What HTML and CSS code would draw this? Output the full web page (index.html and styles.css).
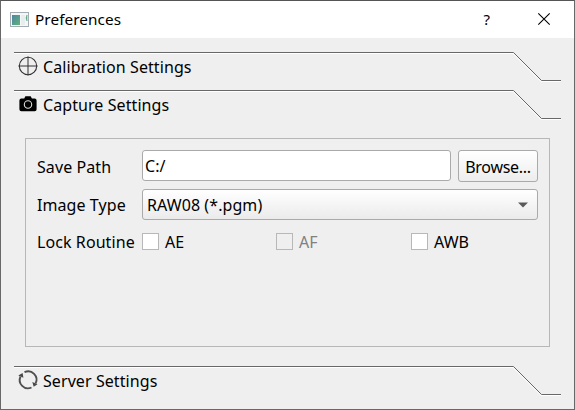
FILE: index.html
```html
<!DOCTYPE html>
<html lang="en">
<head>
<meta charset="utf-8">
<title>Preferences</title>
<link rel="stylesheet" href="styles.css">
</head>
<body>
<main class="window">
  <header class="titlebar">
    <svg class="app-icon" width="19" height="15" viewBox="0 0 19 15">
      <defs><linearGradient id="pane" x1="0" y1="0" x2="1" y2="1"><stop offset="0" stop-color="#4f84a4"/><stop offset="1" stop-color="#5fb477"/></linearGradient></defs>
      <rect x=".5" y=".5" width="18" height="14" fill="#f5f7f7" stroke="#a3adb3"/>
      <rect x="2" y="3" width="8" height="10" fill="url(#pane)"/>
      <rect x="11" y="3" width="4" height="10" fill="#e9edef"/>
      <path d="M17 3v6l-1-3z" fill="#58aa83" stroke="#58aa83" stroke-width=".6"/>
    </svg>
    <h1 class="title">Preferences</h1>
    <span class="help">?</span>
    <svg class="close" width="12" height="12" viewBox="0 0 12 12"><path d="M.3.3l11.4 11.4M11.7.3L.3 11.7" stroke="#000" stroke-width="1.1"/></svg>
  </header>

  <section class="toolbox">
    <div class="tab">
      <svg class="edge" width="547" height="30" viewBox="0 0 547 30"><path class="light" d="M0 1.5H499L527 29.5H547"/><path class="dark" d="M0 .5H499.5L527.5 28.5H547"/></svg>
      <svg class="icon" width="20" height="20" viewBox="0 0 20 20"><g fill="none" stroke="#333"><circle cx="10" cy="10" r="8.7" stroke-width="1.1"/><path d="M10 .5v19M.5 10h19" stroke-width="1"/></g></svg>
      <span class="label">Calibration Settings</span>
    </div>
    <div class="tab">
      <svg class="edge" width="547" height="30" viewBox="0 0 547 30"><path class="light" d="M0 1.5H499L527 29.5H547"/><path class="dark" d="M0 .5H499.5L527.5 28.5H547"/></svg>
      <svg class="icon" width="20" height="20" viewBox="0 0 20 20"><path d="M3.4 4.5h2.8l1.2-2.3h5.3l1.2 2.3h2.7q2 0 2 2v8.7q0 2-2 2H3.4q-2 0-2-2V6.500q0-2 2-2z" fill="#000"/><circle cx="10" cy="10.500" r="3.700" fill="none" stroke="#ddd" stroke-width="1.100"/></svg>
      <span class="label">Capture Settings</span>
    </div>

    <form class="panel">
      <div class="row path-row">
        <span class="name">Save Path</span>
        <div class="field">C:/</div>
        <button class="browse" type="button">Browse...</button>
      </div>
      <div class="row type-row">
        <span class="name">Image Type</span>
        <div class="combo"><span class="value">RAW08 (*.pgm)</span><svg width="10" height="6" viewBox="0 0 10 6"><path d="M0 .5h10L5 5.500z" fill="#5a5a5a"/></svg></div>
      </div>
      <div class="row lock-row">
        <span class="name">Lock Routine</span>
        <span class="check"><i class="box"></i><span>AE</span></span>
        <span class="check disabled"><i class="box"></i><span>AF</span></span>
        <span class="check"><i class="box"></i><span>AWB</span></span>
      </div>
    </form>

    <div class="tab">
      <svg class="edge" width="547" height="30" viewBox="0 0 547 30"><path class="light" d="M0 1.5H499L527 29.5H547"/><path class="dark" d="M0 .5H499.5L527.5 28.5H547"/></svg>
      <svg class="icon" width="20" height="20" viewBox="0 0 20 20"><g fill="none" stroke="#505050" stroke-width="1.900"><path d="M6.500 2.200A8.300 8.300 0 0 1 17.500 13.500"/><path d="M13.500 17.500A8.300 8.300 0 0 1 2.500 6.500"/></g><path d="M14.300 12l5.200 2.300-3.800 2.500zM5.400 7.700L.3 5.500 4.600 3z" fill="#484848"/></svg>
      <span class="label">Server Settings</span>
    </div>
  </section>
</main>
</body>
</html>
```
FILE: styles.css
```css
* { box-sizing: border-box; }
body { margin: 0; font: 16px/20px "Noto Sans", "Open Sans", sans-serif; letter-spacing: .08px; color: #000; }
svg { display: block; flex: none; overflow: visible; }
.window { width: 575px; height: 410px; background: #efefef; border: 1px solid #686868; border-top-color: #555; }
.titlebar { height: 37px; background: #fff; display: flex; align-items: center; padding: 0 24px 0 9px; }
.title { margin: 0 auto 0 6px; padding-bottom: 1px; font-size: 15.3px; font-weight: 400; }
.help { font-size: 15px; margin-right: 48px; padding-bottom: 2px; }
.close { margin-bottom: 1px; }
.toolbox { padding: 14px 13px 0; }
.tab { position: relative; height: 38px; display: flex; align-items: flex-start; padding: 4px 0 0 4px; gap: 5px; }
.edge { position: absolute; left: 0; top: 0; }
.edge path { fill: none; stroke-width: 1; }
.edge .dark { stroke: #686868; }
.edge .light { stroke: #fff; }
.label { white-space: nowrap; padding-top: 1px; }
.panel { margin: 10px 11px 19px; height: 209px; border: 1px solid #b7b7b7; padding: 11px 11px 0; }
.row { display: flex; white-space: nowrap; }
.name { width: 105px; flex: none; line-height: 32px; }
.path-row { height: 39px; }
.path-row .name { line-height: 34px; }
.type-row { height: 39px; }
.field { width: 309px; height: 31px; border: 1px solid #aaa; border-radius: 3px; background: #fff; padding-left: 2px; line-height: 31px; }
.browse { width: 80px; height: 32px; margin-left: 7px; padding: 1px 0 0; border: 1px solid #aaa; border-radius: 3px; background: linear-gradient(#fff, #ededed); font: inherit; letter-spacing: -.3px; color: #000; }
.combo { width: 396px; height: 31px; border: 1px solid #aaa; border-radius: 3px; background: linear-gradient(#fff, #ebebeb); display: flex; align-items: center; justify-content: space-between; padding: 0 9px 0 4px; }
.lock-row { height: 32px; margin-top: -3px; align-items: center; }
.lock-row .name, .check span { padding-top: 2px; }
.check { display: flex; align-items: center; gap: 6px; width: 134px; }
.check:last-child { width: auto; margin-left: 1px; }
.box { width: 17px; height: 17px; border: 1px solid #b8b8b8; background: #fff; }
.disabled { color: #808080; }
.disabled .box { background: #efefef; }
```
